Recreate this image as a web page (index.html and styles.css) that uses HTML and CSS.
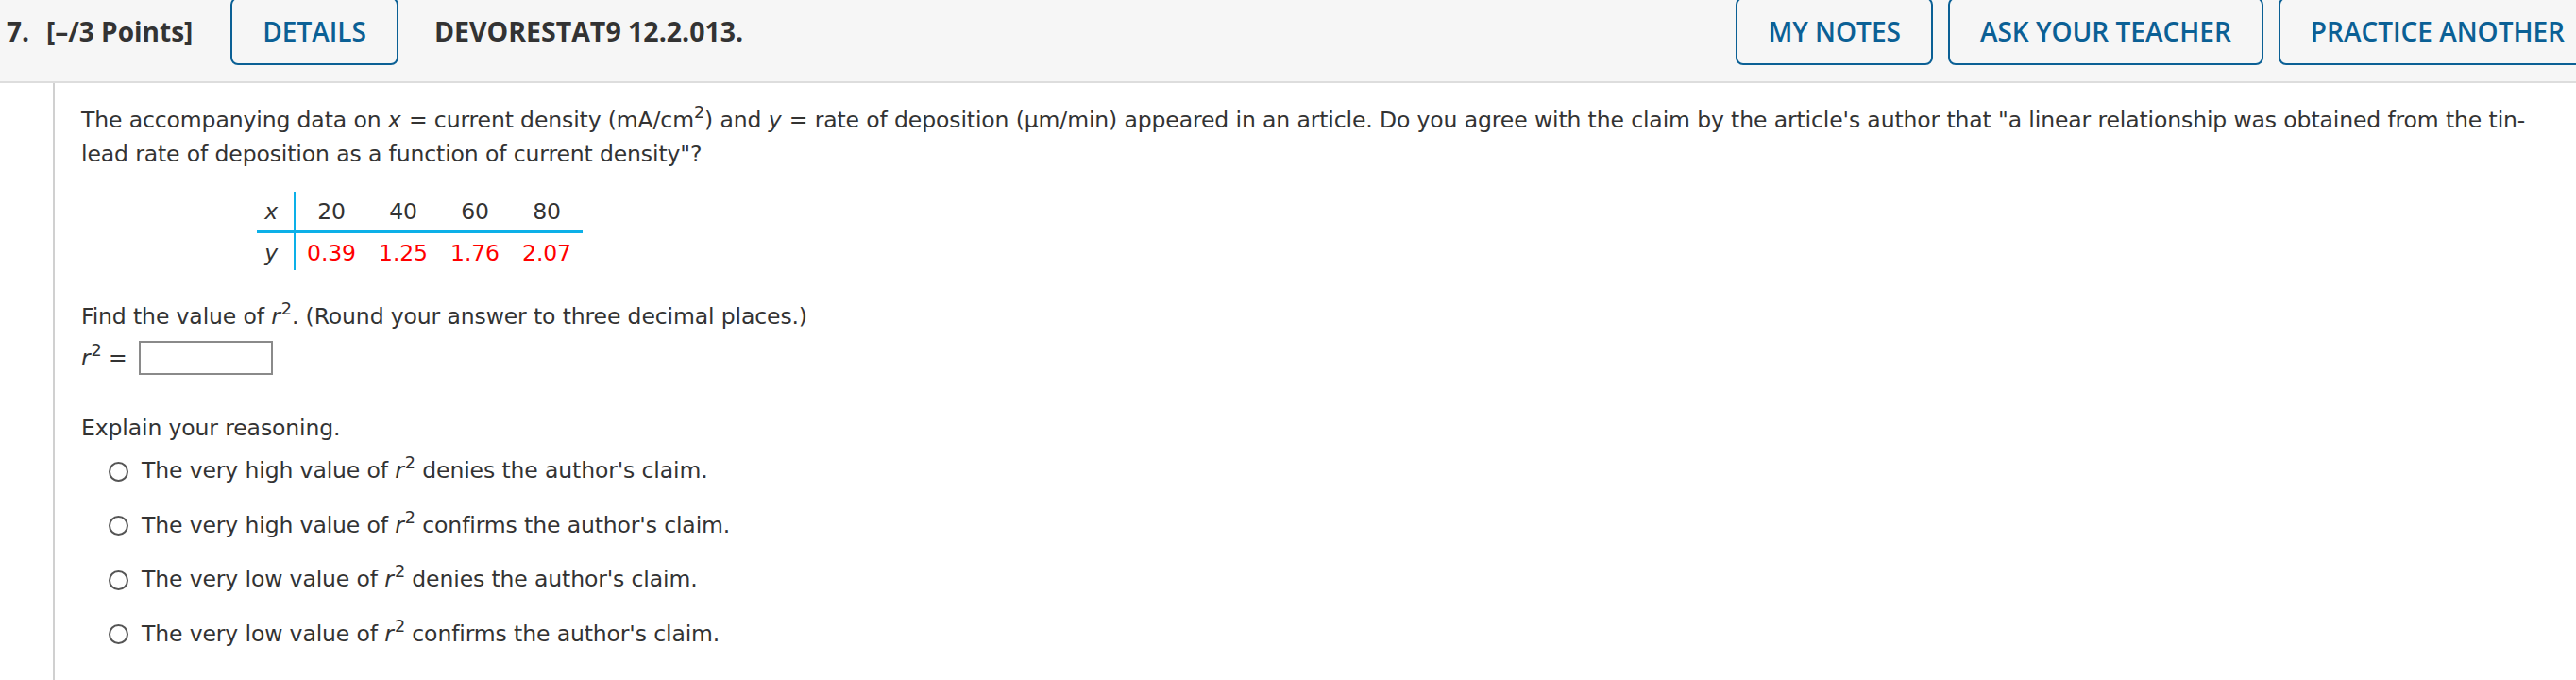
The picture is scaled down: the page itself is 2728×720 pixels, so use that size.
FILE: index.html
```html
<!DOCTYPE html>
<html>
<head>
<meta charset="utf-8">
<link rel="stylesheet" href="styles.css">
</head>
<body>
<div class="header">
  <span class="qnum">7.</span>
  <span class="points">[–/3 Points]</span>
  <span class="btn">DETAILS</span>
  <span class="qid">DEVORESTAT9 12.2.013.</span>
  <div class="spacer"></div>
  <div class="right-btns">
    <span class="btn">MY NOTES</span>
    <span class="btn">ASK YOUR TEACHER</span>
    <span class="btn">PRACTICE ANOTHER</span>
  </div>
</div>
<div class="main">
  <div class="content">
    <p class="para">The accompanying data on <i>x</i> = current density (mA/cm<sup>2</sup>) and <i>y</i> = rate of deposition (µm/min) appeared in an article. Do you agree with the claim by the article's author that "a linear relationship was obtained from the tin-lead rate of deposition as a function of current density"?</p>
    <table class="data">
      <tr class="row-x">
        <td class="lab"><i>x</i></td>
        <td>20</td><td>40</td><td>60</td><td>80</td>
      </tr>
      <tr class="row-y">
        <td class="lab"><i>y</i></td>
        <td class="red">0.39</td><td class="red">1.25</td><td class="red">1.76</td><td class="red">2.07</td>
      </tr>
    </table>
    <p class="find">Find the value of <i>r</i><sup>2</sup>. (Round your answer to three decimal places.)</p>
    <div class="answer">
      <span class="ans-label"><i>r</i><sup>2</sup> =</span>
      <span class="input"></span>
    </div>
    <p class="explain">Explain your reasoning.</p>
    <div class="options">
      <div class="opt"><span class="radio"></span><span>The very high value of <i>r</i><sup>2</sup> denies the author's claim.</span></div>
      <div class="opt"><span class="radio"></span><span>The very high value of <i>r</i><sup>2</sup> confirms the author's claim.</span></div>
      <div class="opt"><span class="radio"></span><span>The very low value of <i>r</i><sup>2</sup> denies the author's claim.</span></div>
      <div class="opt"><span class="radio"></span><span>The very low value of <i>r</i><sup>2</sup> confirms the author's claim.</span></div>
    </div>
  </div>
</div>
</body>
</html>
```

FILE: styles.css
```css
html, body {
  margin: 0;
  padding: 0;
  background: #ffffff;
  overflow: hidden;
}
body {
  width: 2728px;
  height: 720px;
  font-family: "DejaVu Sans", Verdana, sans-serif;
  color: #333333;
}
.header {
  box-sizing: border-box;
  display: flex;
  align-items: center;
  height: 91px;
  margin-top: -3px;
  padding: 0 0 17px 7px;
  background: #f6f6f6;
  border-bottom: 2px solid #dddddd;
  font-family: "Open Sans", sans-serif;
  font-size: 28px;
  font-weight: 700;
  color: #333333;
  white-space: nowrap;
}
.qnum {
  margin-right: 18px;
}
.points {
  margin-right: 40px;
}
.btn {
  box-sizing: border-box;
  display: flex;
  align-items: center;
  height: 72px;
  padding: 0 32px;
  border: 2px solid #0b6095;
  border-radius: 8px;
  color: #0b6095;
  font-weight: 600;
}
.qid {
  margin-left: 38px;
  font-size: 28.5px;
}
.spacer {
  flex: 1;
}
.right-btns {
  display: flex;
  gap: 16px;
  margin-right: -22px;
}
.main {
  display: flex;
}
.content {
  margin-left: 56px;
  border-left: 2px solid #d0d0d0;
  padding: 21px 30px 60px 28px;
  flex: 1;
  font-size: 23.5px;
  letter-spacing: -0.12px;
  line-height: 36px;
}
p {
  margin: 0;
}
i {
  padding-right: 1px;
}
sup {
  font-size: 0.75em;
  line-height: 0;
  vertical-align: 0.55em;
}
.data {
  border-collapse: collapse;
  margin: 22px 0 0 186px;
}
.data td {
  padding: 3px 0 2px 0;
  width: 76px;
  text-align: center;
  line-height: 36px;
}
.data .row-x td {
  border-bottom: 3px solid #0cb0e8;
}
.data .row-y td {
  padding: 3px 0 0 0;
}
.data td.lab {
  width: 23px;
  padding-right: 16px;
  text-align: right;
  border-right: 2px solid #0cb0e8;
}
.red {
  color: #ff0000;
}
.find {
  margin-top: 31px;
}
.answer {
  display: flex;
  align-items: center;
  margin-top: 8px;
}
.ans-label {
  margin-right: 12px;
}
.input {
  box-sizing: border-box;
  width: 142px;
  height: 36px;
  border: 2px solid #8a8a8a;
  background: #ffffff;
}
.explain {
  margin-top: 38px;
}
.options {
  display: flex;
  flex-direction: column;
  gap: 21.5px;
  margin-top: 9px;
  padding-left: 29px;
}
.opt {
  display: flex;
  align-items: center;
}
.radio {
  box-sizing: border-box;
  width: 21px;
  height: 21px;
  border: 2px solid #555555;
  border-radius: 50%;
  margin-right: 14px;
  margin-top: 2px;
}
```
